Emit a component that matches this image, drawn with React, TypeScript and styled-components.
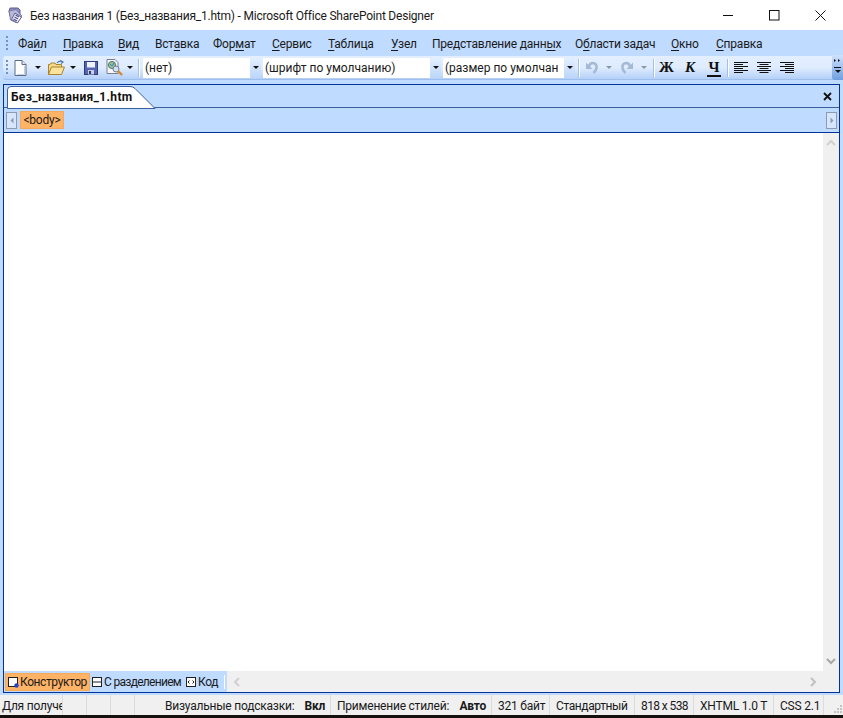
import styled, { createGlobalStyle } from "styled-components";

const GlobalStyle = createGlobalStyle`
  html, body {
    margin: 0;
    padding: 0;
    background: #000;
  }
  * {
    box-sizing: border-box;
  }
`;

const Window = styled.div`
  width: 843px;
  height: 718px;
  overflow: hidden;
  display: flex;
  flex-direction: column;
  background: #bfdbff;
  font-family: Roboto, "Noto Sans", sans-serif;
  font-size: 12px;
  letter-spacing: -0.22px;
  color: #1a1a1a;
`;

const TitleBar = styled.div`
  height: 30px;
  background: #fff;
  display: flex;
  align-items: center;
  padding-left: 7px;
  flex-shrink: 0;
`;

const TitleText = styled.div`
  margin-left: 6px;
  flex: 1;
  font-size: 12px;
  margin-top: 1px;
  white-space: nowrap;
`;

const WinButton = styled.div`
  width: 46px;
  height: 30px;
  display: flex;
  align-items: center;
  justify-content: center;
`;

const MenuBar = styled.div`
  height: 26px;
  display: flex;
  align-items: center;
  padding: 2px 0 0 6px;
  flex-shrink: 0;
`;

const Grip = styled.div<{ $mr?: number }>`
  width: 2px;
  height: 16px;
  margin-right: ${(p) => p.$mr ?? 10}px;
  flex-shrink: 0;
  background: repeating-linear-gradient(to bottom, #6f94cc 0 2px, transparent 2px 4px);
`;

const MenuItem = styled.div<{ $w: number }>`
  width: ${(p) => p.$w}px;
  flex-shrink: 0;
  white-space: nowrap;
  font-size: 12px;
  u {
    text-underline-offset: 2px;
  }
`;

const Toolbar = styled.div`
  height: 24px;
  margin-left: 3px;
  display: flex;
  align-items: center;
  padding-left: 3px;
  border-radius: 3px 0 0 3px;
  background: linear-gradient(to bottom, #e3efff 0%, #dfecfe 50%, #b4d0f8 100%);
  border-bottom: 1px solid #9ebfee;
  flex-shrink: 0;
`;

const ToolIcon = styled.div<{ $ml?: number }>`
  margin-left: ${(p) => p.$ml ?? 0}px;
  display: flex;
  align-items: center;
  flex-shrink: 0;
`;

const Sep = styled.div<{ $ml: number }>`
  width: 1px;
  height: 18px;
  margin-left: ${(p) => p.$ml}px;
  background: #9fbfec;
  box-shadow: 1px 0 0 #fff;
  flex-shrink: 0;
`;

const Combo = styled.div<{ $w: number; $ml: number }>`
  width: ${(p) => p.$w}px;
  height: 20px;
  margin-left: ${(p) => p.$ml}px;
  background: #fff;
  display: flex;
  align-items: center;
  padding-left: 2px;
  flex-shrink: 0;
  font-size: 12px;
  letter-spacing: 0;
`;

const ComboText = styled.div`
  flex: 1;
  overflow: hidden;
  white-space: nowrap;
`;

const ComboButton = styled.div`
  width: 11px;
  height: 20px;
  background: linear-gradient(to bottom, #e3efff, #bcd6fa);
  display: flex;
  align-items: center;
  justify-content: center;
  flex-shrink: 0;
`;

const Caret = styled.div<{ $ml?: number; $c?: string }>`
  width: 0;
  height: 0;
  margin-left: ${(p) => p.$ml ?? 0}px;
  border-left: 3px solid transparent;
  border-right: 3px solid transparent;
  border-top: 3px solid ${(p) => p.$c ?? "#111"};
  flex-shrink: 0;
`;

const FormatLetter = styled.div<{ $ml: number; $italic?: boolean; $under?: boolean }>`
  margin-left: ${(p) => p.$ml}px;
  width: 14px;
  text-align: center;
  font-family: "Liberation Serif", "DejaVu Serif", serif;
  font-weight: 700;
  font-size: 15px;
  line-height: 15px;
  padding-top: 1px;
  color: #111;
  font-style: ${(p) => (p.$italic ? "italic" : "normal")};
  border-bottom: ${(p) => (p.$under ? "2px solid #111" : "2px solid transparent")};
  flex-shrink: 0;
`;

const ToolbarEnd = styled.div`
  margin-left: auto;
  width: 11px;
  height: 25px;
  margin-top: -1px;
  margin-bottom: -1px;
  border-radius: 0 0 0 3px;
  background: linear-gradient(to bottom, #cfe2fc, #6f9fe0);
  display: flex;
  flex-direction: column;
  align-items: center;
  padding-top: 4px;
  flex-shrink: 0;
`;

const ChevronTop = styled.div`
  width: 7px;
  height: 1px;
  margin-top: 5px;
  margin-bottom: 2px;
  background: #111;
`;

const DocPanel = styled.div`
  margin: 4px 3px 0 3px;
  height: 609px;
  border: 1px solid #003399;
  display: flex;
  flex-direction: column;
  flex-shrink: 0;
  background: #bfdbff;
`;

const TabRow = styled.div`
  height: 23px;
  position: relative;
  display: flex;
  align-items: flex-end;
  border-bottom: 1px solid #3b5f9e;
  padding-left: 3px;
  flex-shrink: 0;
`;

const DocTab = styled.div`
  position: relative;
  height: 22px;
  width: 127px;
  margin-bottom: -1px;
  padding: 4px 0 0 4px;
  font-weight: 700;
  font-size: 12px;
  letter-spacing: 0.35px;
  color: #111;
  white-space: nowrap;
  z-index: 1;
`;

const TabShape = styled.svg`
  position: absolute;
  left: 0;
  top: 0;
  z-index: -1;
`;

const CloseDoc = styled.div`
  margin-left: auto;
  align-self: center;
  margin-right: 7px;
  display: flex;
`;

const CrumbRow = styled.div`
  height: 25px;
  display: flex;
  align-items: center;
  padding: 0 2px;
  border-bottom: 1px solid #003399;
  flex-shrink: 0;
`;

const CrumbArrow = styled.div`
  width: 11px;
  height: 17px;
  border: 1px solid #8c9bb0;
  background: #d7e6fb;
  display: flex;
  align-items: center;
  justify-content: center;
  flex-shrink: 0;
`;

const BodyTag = styled.div`
  margin-left: 3px;
  height: 18px;
  width: 44px;
  background: #ffb366;
  border: 1px solid #f6a95a;
  text-align: center;
  font-size: 12px;
  line-height: 16px;
`;

const CrumbEnd = styled(CrumbArrow)`
  margin-left: auto;
`;

const Workspace = styled.div`
  flex: 1;
  display: flex;
  min-height: 0;
  background: #fff;
`;

const Page = styled.div`
  flex: 1;
  background: #fff;
`;

const VScroll = styled.div`
  width: 16px;
  background: #f0f0f0;
  display: flex;
  flex-direction: column;
  justify-content: space-between;
  align-items: center;
  padding: 6px 0;
  flex-shrink: 0;
`;

const BottomRow = styled.div`
  height: 21px;
  display: flex;
  background: #f0f0f0;
  flex-shrink: 0;
`;

const ViewTabs = styled.div`
  width: 223px;
  background: #bfdbff;
  display: flex;
  align-items: center;
  padding-left: 1px;
  flex-shrink: 0;
`;

const ViewTab = styled.div<{ $active?: boolean; $w: number; $ls?: number }>`
  width: ${(p) => p.$w}px;
  height: 18px;
  display: flex;
  align-items: center;
  gap: 1px;
  padding-left: 1px;
  background: ${(p) => (p.$active ? "#ffb366" : "transparent")};
  border: 1px solid ${(p) => (p.$active ? "#f6a95a" : "transparent")};
  font-size: 12px;
  letter-spacing: ${(p) => p.$ls ?? -0.3}px;
  white-space: nowrap;
  flex-shrink: 0;
  svg {
    flex-shrink: 0;
  }
`;

const ViewDivider = styled.div`
  width: 1px;
  height: 14px;
  background: #fff;
  margin-left: auto;
  margin-right: 2px;
`;

const HScroll = styled.div`
  flex: 1;
  display: flex;
  align-items: center;
  justify-content: space-between;
  padding: 0 22px 0 6px;
`;

const StatusBar = styled.div`
  margin-top: 2px;
  height: 20px;
  background: #f0f0f0;
  display: flex;
  align-items: center;
  flex-shrink: 0;
  font-size: 12px;
  position: relative;
`;

const StatusCell = styled.div<{ $w: number; $pl?: number; $pr?: number; $ls?: number }>`
  width: ${(p) => p.$w}px;
  height: 20px;
  padding: 2px ${(p) => p.$pr ?? 5}px 0 ${(p) => p.$pl ?? 6}px;
  border-right: 1px solid #dcdcdc;
  display: flex;
  align-items: center;
  justify-content: space-between;
  overflow: hidden;
  white-space: nowrap;
  flex-shrink: 0;
  letter-spacing: ${(p) => p.$ls ?? -0.22}px;
`;

const Strong = styled.b`
  font-weight: 700;
`;

const StatusGrip = styled.svg`
  position: absolute;
  right: 0;
  bottom: 1px;
`;

const BottomStrip = styled.div`
  flex: 1;
  background: #14110f;
`;

const Arrow = ({ dir, color = "#b0b0b0" }: { dir: "up" | "down" | "left" | "right"; color?: string }) => {
  const paths = {
    up: "M1 6 L5 2 L9 6",
    down: "M1 2 L5 6 L9 2",
    left: "M6 1 L2 5 L6 9",
    right: "M2 1 L6 5 L2 9",
  };
  const horizontal = dir === "up" || dir === "down";
  return (
    <svg width={horizontal ? 10 : 8} height={horizontal ? 8 : 10} fill="none" stroke={color} strokeWidth="2">
      <path d={paths[dir]} />
    </svg>
  );
};

const AppLogo = () => (
  <svg width="17" height="17" viewBox="0 0 17 17">
    <path d="M2 4 L3 1 H11 L13 3 V9 H3 Z" fill="#8f8fc0" stroke="#5e5c93" />
    <path d="M2 4 L9 2.5 L15 9 L9 15.5 L3.5 13 Z" fill="#b9b9d8" stroke="#6a69a0" strokeWidth=".8" />
    <path d="M8 6 L14.5 10 L10.5 16 L4.5 12.5 Z" fill="#f4f4fb" stroke="#5e5c93" />
    <path d="M8.5 8 L12 10 M7.5 10 L11 12 M6.5 12 L10 14" stroke="#4f4d88" strokeWidth="1.1" />
  </svg>
);

const NewDocIcon = () => (
  <svg width="13" height="16" viewBox="0 0 13 16">
    <path d="M1 .5 H8 L12 4.5 V15.5 H1 Z" fill="#fff" stroke="#5a6a88" />
    <path d="M8 .5 V4.5 H12" fill="#dfe7f3" stroke="#5a6a88" />
    <path d="M10.5 6 V14.5 H3" fill="none" stroke="#c3d0e4" />
  </svg>
);

const OpenIcon = () => (
  <svg width="17" height="16" viewBox="0 0 17 16">
    <path d="M.5 14.5 V4.5 H2 L3 3 H7 L8 4.5 H13.5 V7" fill="#f5d98a" stroke="#a8842c" />
    <path d="M.5 14.5 L3.5 7 H16.5 L13.5 14.5 Z" fill="#fbe39c" stroke="#a8842c" />
    <path d="M9 3 Q11 0.5 14 1.5 M12.5 .5 L15 2 L13 3.5" fill="none" stroke="#4f78a8" strokeWidth="1.2" />
  </svg>
);

const SaveIcon = () => (
  <svg width="14" height="14" viewBox="0 0 14 14">
    <rect x=".5" y=".5" width="13" height="13" fill="#5664b4" stroke="#2e3a7c" />
    <rect x="3" y="1" width="8" height="5.5" fill="#eef0fa" />
    <rect x="4" y="9" width="6" height="4.5" fill="#c8cde2" />
    <rect x="5" y="10" width="2" height="3" fill="#2e3a7c" />
  </svg>
);

const PreviewIcon = () => (
  <svg width="17" height="17" viewBox="0 0 17 17">
    <path d="M1 .5 H9 L12 3.5 V14.5 H1 Z" fill="#f8f8fb" stroke="#77808f" />
    <circle cx="6" cy="6" r="3.6" fill="#8fc58e" stroke="#5c6f80" />
    <path d="M4 5 L6 7 L8 4" stroke="#3d7fbf" fill="none" />
    <circle cx="10" cy="10" r="3" fill="#cfe3f5" stroke="#6f7d8f" />
    <path d="M12 12 L16 16" stroke="#d28a2d" strokeWidth="2.4" />
  </svg>
);

const UndoIcon = ({ flip }: { flip?: boolean }) => (
  <svg width="13" height="15" viewBox="0 0 13 15" style={flip ? { transform: "scaleX(-1)" } : undefined}>
    <path d="M3 7 Q3.5 3 7 3 Q11 3.5 10.5 8 Q10 11 7.5 13" fill="none" stroke="#a3b9d6" strokeWidth="2.6" />
    <path d="M0 2.5 L0 9 L6.5 9 Z" fill="#a3b9d6" />
  </svg>
);

const AlignIcon = ({ kind }: { kind: "left" | "center" | "right" }) => {
  const shortX = kind === "left" ? 0 : kind === "center" ? 2.5 : 5;
  const rows = [
    [14, 0],
    [9, shortX],
    [14, 0],
    [9, shortX],
    [14, 0],
    [9, shortX],
  ];
  return (
    <svg width="14" height="12" viewBox="0 0 14 12">
      {rows.map(([w, x], i) => (
        <rect key={i} x={x} y={i * 2} width={w} height="1" fill="#111" />
      ))}
    </svg>
  );
};

const DesignIcon = () => (
  <svg width="12" height="12" viewBox="0 0 12 12">
    <rect x="1.5" y="1.5" width="9" height="9" fill="#fff" stroke="#222" />
    <circle cx="9.5" cy="9.5" r="2.2" fill="#1f45c9" />
  </svg>
);

const SplitIcon = () => (
  <svg width="11" height="12" viewBox="0 0 11 12">
    <rect x=".5" y="1.5" width="9" height="9" fill="#fff" stroke="#222" />
    <path d="M0 6 H10" stroke="#222" />
  </svg>
);

const CodeIcon = () => (
  <svg width="11" height="12" viewBox="0 0 11 12">
    <rect x=".5" y="1.5" width="9" height="9" fill="#fff" stroke="#222" />
    <path d="M2 6 L3.5 4.5 M2 6 L3.5 7.5 M8 6 L6.5 4.5 M8 6 L6.5 7.5" stroke="#222" />
  </svg>
);

const menuItems: [string, string, string, number][] = [
  ["Фа", "й", "л", 45],
  ["", "П", "равка", 55],
  ["", "В", "ид", 37],
  ["Вст", "а", "вка", 58],
  ["Фор", "м", "ат", 59],
  ["", "С", "ервис", 56],
  ["", "Т", "аблица", 63],
  ["", "У", "зел", 41],
  ["Представление данн", "ы", "х", 143],
  ["О", "б", "ласти задач", 96],
  ["", "О", "кно", 45],
  ["", "С", "правка", 60],
];

export default function App() {
  return (
    <Window>
      <GlobalStyle />
      <TitleBar>
        <AppLogo />
        <TitleText>Без названия 1 (Без_названия_1.htm) - Microsoft Office SharePoint Designer</TitleText>
        <WinButton>
          <svg width="11" height="11">
            <path d="M0 5.5 H10" stroke="#111" />
          </svg>
        </WinButton>
        <WinButton>
          <svg width="11" height="11">
            <rect x=".5" y=".5" width="9.5" height="9.5" fill="none" stroke="#111" />
          </svg>
        </WinButton>
        <WinButton>
          <svg width="11" height="11">
            <path d="M.5 .5 L10.5 10.5 M10.5 .5 L.5 10.5" stroke="#111" />
          </svg>
        </WinButton>
      </TitleBar>

      <MenuBar>
        <Grip />
        {menuItems.map(([a, u, b, w]) => (
          <MenuItem key={a + u + b} $w={w}>
            {a}
            <u>{u}</u>
            {b}
          </MenuItem>
        ))}
      </MenuBar>

      <Toolbar>
        <Grip $mr={6} />
        <ToolIcon>
          <NewDocIcon />
        </ToolIcon>
        <Caret $ml={8} />
        <ToolIcon $ml={7}>
          <OpenIcon />
        </ToolIcon>
        <Caret $ml={5} />
        <ToolIcon $ml={8}>
          <SaveIcon />
        </ToolIcon>
        <ToolIcon $ml={8}>
          <PreviewIcon />
        </ToolIcon>
        <Caret $ml={4} />
        <Sep $ml={5} />
        <Combo $w={118} $ml={4}>
          <ComboText>(нет)</ComboText>
          <ComboButton>
            <Caret />
          </ComboButton>
        </Combo>
        <Combo $w={178} $ml={2}>
          <ComboText>(шрифт по умолчанию)</ComboText>
          <ComboButton>
            <Caret />
          </ComboButton>
        </Combo>
        <Combo $w={132} $ml={2}>
          <ComboText>(размер по умолчан</ComboText>
          <ComboButton>
            <Caret />
          </ComboButton>
        </Combo>
        <Sep $ml={3} />
        <ToolIcon $ml={7}>
          <UndoIcon />
        </ToolIcon>
        <Caret $ml={7} $c="#8a97a8" />
        <ToolIcon $ml={8}>
          <UndoIcon flip />
        </ToolIcon>
        <Caret $ml={8} $c="#8a97a8" />
        <Sep $ml={6} />
        <FormatLetter $ml={5}>Ж</FormatLetter>
        <FormatLetter $ml={10} $italic>
          К
        </FormatLetter>
        <FormatLetter $ml={10} $under>
          Ч
        </FormatLetter>
        <Sep $ml={6} />
        <ToolIcon $ml={6}>
          <AlignIcon kind="left" />
        </ToolIcon>
        <ToolIcon $ml={9}>
          <AlignIcon kind="center" />
        </ToolIcon>
        <ToolIcon $ml={9}>
          <AlignIcon kind="right" />
        </ToolIcon>
        <ToolbarEnd>
          <svg width="7" height="3">
            <path d="M0 0 L2 1.5 L0 3 Z M4 0 L6 1.5 L4 3 Z" fill="#111" />
          </svg>
          <ChevronTop />
          <Caret />
        </ToolbarEnd>
      </Toolbar>

      <DocPanel>
        <TabRow>
          <DocTab>
            <TabShape width="150" height="23" viewBox="0 0 150 23">
              <path d="M.5 22.5 V4 Q.5 .5 4 .5 H123 Q126 .5 128 2.5 L148 22.5 Z" fill="#fff" stroke="#3b5f9e" />
            </TabShape>
            Без_названия_1.htm
          </DocTab>
          <CloseDoc>
            <svg width="9" height="9">
              <path d="M1 1 L8 8 M8 1 L1 8" stroke="#111" strokeWidth="1.8" />
            </svg>
          </CloseDoc>
        </TabRow>
        <CrumbRow>
          <CrumbArrow>
            <Caret style={{ transform: "rotate(90deg)" }} $c="#8c9bb0" />
          </CrumbArrow>
          <BodyTag>&lt;body&gt;</BodyTag>
          <CrumbEnd>
            <Caret style={{ transform: "rotate(-90deg)" }} $c="#8c9bb0" />
          </CrumbEnd>
        </CrumbRow>
        <Workspace>
          <Page />
          <VScroll>
            <Arrow dir="up" color="#d0d0d0" />
            <Arrow dir="down" color="#a8a8a8" />
          </VScroll>
        </Workspace>
        <BottomRow>
          <ViewTabs>
            <ViewTab $active $w={85} $ls={-0.4}>
              <DesignIcon />
              Конструктор
            </ViewTab>
            <ViewTab $w={94} $ls={-0.7}>
              <SplitIcon />С разделением
            </ViewTab>
            <ViewTab $w={36}>
              <CodeIcon />
              Код
            </ViewTab>
            <ViewDivider />
          </ViewTabs>
          <HScroll>
            <Arrow dir="left" color="#d0d0d0" />
            <Arrow dir="right" color="#c0c0c0" />
          </HScroll>
        </BottomRow>
      </DocPanel>

      <StatusBar>
        <StatusCell $w={63} $pl={2} $pr={0}>
          Для получения
        </StatusCell>
        <StatusCell $w={24} />
        <StatusCell $w={24} />
        <StatusCell $w={24} />
        <StatusCell $w={196} $pl={30}>
          <span>Визуальные подсказки:</span>
          <Strong>Вкл</Strong>
        </StatusCell>
        <StatusCell $w={161}>
          <span>Применение стилей:</span>
          <Strong>Авто</Strong>
        </StatusCell>
        <StatusCell $w={58}>321 байт</StatusCell>
        <StatusCell $w={85} $ls={-0.4}>
          Стандартный
        </StatusCell>
        <StatusCell $w={59} $ls={-0.6}>
          818 x 538
        </StatusCell>
        <StatusCell $w={80}>XHTML 1.0 T</StatusCell>
        <StatusCell $w={50}>CSS 2.1</StatusCell>
        <StatusGrip width="10" height="10">
          <path d="M7 1 h2 v2 h-2z M4 4 h2 v2 h-2z M7 4 h2 v2 h-2z M1 7 h2 v2 h-2z M4 7 h2 v2 h-2z M7 7 h2 v2 h-2z" fill="#c4c4c4" />
        </StatusGrip>
      </StatusBar>
      <BottomStrip />
    </Window>
  );
}
